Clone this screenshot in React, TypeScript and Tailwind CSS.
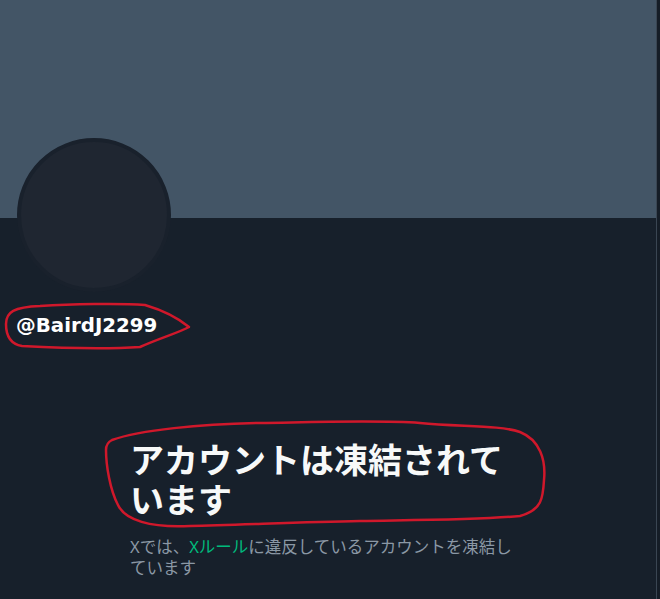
export default function App() {
  const jp = { fontFamily: '"Noto Sans", "Noto Sans CJK JP", sans-serif' };

  return (
    <div className="relative h-[599px] w-[660px] overflow-hidden bg-[#151d27]" style={jp}>
      <div className="h-full w-[657px] border-r border-[#3a4653] bg-[#17202b]">
        {/* banner */}
        <div className="h-[218px] bg-[#435566]" />

        {/* avatar */}
        <div className="-mt-[80px] ml-[17px] h-[154px] w-[154px] rounded-full border-4 border-[#19212c] bg-[#1f2631]" />

        <div
          className="mt-[22px] pl-[16px] text-[19.8px] font-bold leading-6 text-white"
          style={{ fontFamily: '"DejaVu Sans", sans-serif' }}
        >
          @BairdJ2299
        </div>

        {/* suspended notice */}
        <div className="ml-[130px] mt-[102px] w-[392px]">
          <h1 className="text-[34px] font-bold leading-[40px] text-[#f7f9f9]">
            アカウントは凍結されています
          </h1>
          <p className="mt-[16px] text-[16.5px] leading-[21px] text-[#8b98a5]">
            Xでは、<span className="text-[#00ba7c]">Xルール</span>に違反しているアカウントを凍結しています
          </p>
        </div>
      </div>

      {/* red hand-drawn marks */}
      <svg className="pointer-events-none absolute inset-0" width="660" height="599" viewBox="0 0 660 599" fill="none">
        <path
          d="M40 306 C 70 304, 120 303, 145 305 C 162 310, 178 318, 189 327 C 178 333, 160 338, 140 347 C 110 349, 60 348, 22 346 C 10 344, 6 335, 6 324 C 6 312, 14 307, 40 306 Z"
          stroke="#d0182b"
          strokeWidth="2.5"
          strokeLinejoin="round"
        />
        <path
          d="M112 440 C 140 430, 200 424, 260 423 C 320 422, 380 420, 420 423 C 460 427, 500 425, 520 432 C 540 440, 546 460, 544 480 C 543 498, 542 510, 520 516 C 480 520, 420 520, 360 521 C 300 522, 240 525, 190 526 C 150 528, 125 520, 118 505 C 110 490, 106 465, 106 450 C 106 445, 108 442, 112 440 Z"
          stroke="#d0182b"
          strokeWidth="2.5"
          strokeLinejoin="round"
        />
      </svg>
    </div>
  );
}
